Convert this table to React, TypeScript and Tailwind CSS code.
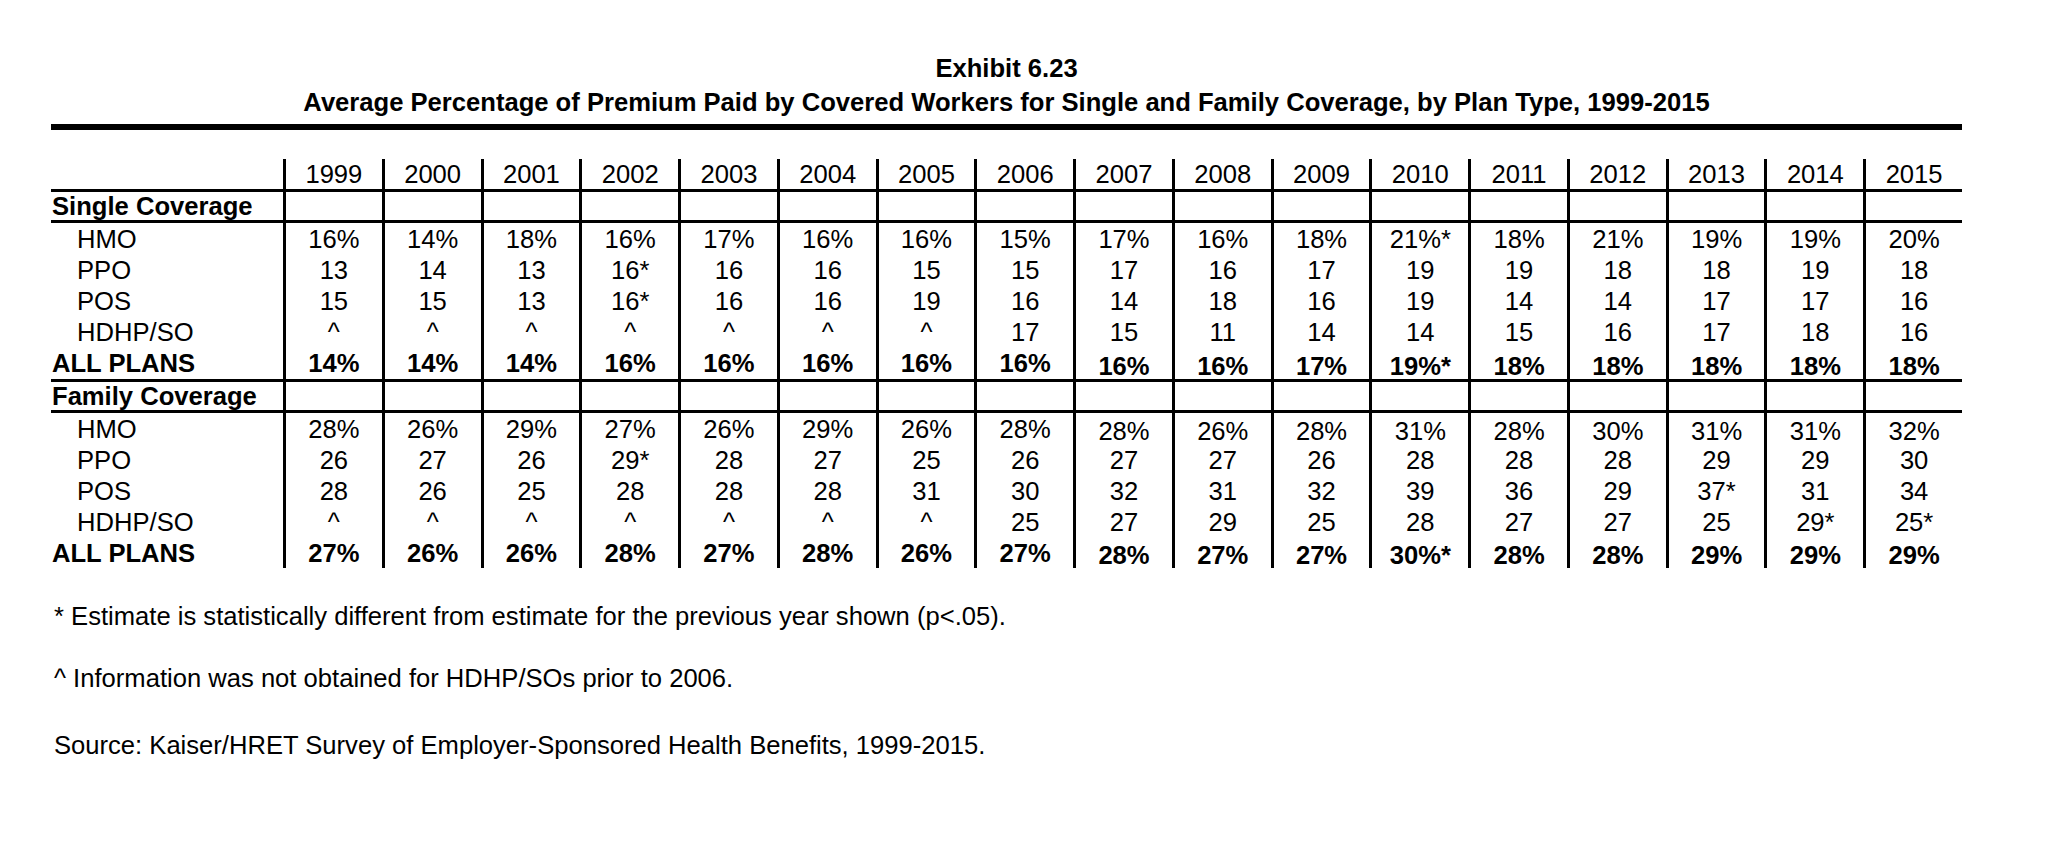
import React from "react";

const YEARS = [
  "1999", "2000", "2001", "2002", "2003", "2004", "2005", "2006", "2007",
  "2008", "2009", "2010", "2011", "2012", "2013", "2014", "2015",
];

// shift: values from 2007 on sit a little lower in the source exhibit
type Row = { label: string; values: string[]; total?: boolean; shift?: boolean };

const single: Row[] = [
  { label: "HMO", values: ["16%", "14%", "18%", "16%", "17%", "16%", "16%", "15%", "17%", "16%", "18%", "21%*", "18%", "21%", "19%", "19%", "20%"] },
  { label: "PPO", values: ["13", "14", "13", "16*", "16", "16", "15", "15", "17", "16", "17", "19", "19", "18", "18", "19", "18"] },
  { label: "POS", values: ["15", "15", "13", "16*", "16", "16", "19", "16", "14", "18", "16", "19", "14", "14", "17", "17", "16"] },
  { label: "HDHP/SO", values: ["^", "^", "^", "^", "^", "^", "^", "17", "15", "11", "14", "14", "15", "16", "17", "18", "16"] },
  { label: "ALL PLANS", total: true, shift: true, values: ["14%", "14%", "14%", "16%", "16%", "16%", "16%", "16%", "16%", "16%", "17%", "19%*", "18%", "18%", "18%", "18%", "18%"] },
];

const family: Row[] = [
  { label: "HMO", shift: true, values: ["28%", "26%", "29%", "27%", "26%", "29%", "26%", "28%", "28%", "26%", "28%", "31%", "28%", "30%", "31%", "31%", "32%"] },
  { label: "PPO", values: ["26", "27", "26", "29*", "28", "27", "25", "26", "27", "27", "26", "28", "28", "28", "29", "29", "30"] },
  { label: "POS", values: ["28", "26", "25", "28", "28", "28", "31", "30", "32", "31", "32", "39", "36", "29", "37*", "31", "34"] },
  { label: "HDHP/SO", values: ["^", "^", "^", "^", "^", "^", "^", "25", "27", "29", "25", "28", "27", "27", "25", "29*", "25*"] },
  { label: "ALL PLANS", total: true, shift: true, values: ["27%", "26%", "26%", "28%", "27%", "28%", "26%", "27%", "28%", "27%", "27%", "30%*", "28%", "28%", "29%", "29%", "29%"] },
];

const grid = "grid grid-cols-[232px_repeat(17,minmax(0,1fr))]";

function Cells({ values, bold, shift }: { values: string[]; bold?: boolean; shift?: boolean }) {
  return (
    <>
      {values.map((v, i) => (
        <div
          key={i}
          className={`border-l-[3px] border-black flex items-center justify-center ${
            shift && i >= 8 ? "pt-[5px]" : ""
          } ${bold ? "font-bold" : ""}`}
        >
          {v}
        </div>
      ))}
    </>
  );
}

function SectionHead({ title }: { title: string }) {
  return (
    <div className={`${grid} h-[31px] border-b-[3px] border-black`}>
      <div className="flex items-center pl-[1px] font-bold">{title}</div>
      <Cells values={YEARS.map(() => "")} />
    </div>
  );
}

function DataRows({ rows, last }: { rows: Row[]; last?: boolean }) {
  return (
    <>
      {rows.map((r) => (
        <div
          key={r.label}
          className={`${grid} ${r.total && !last ? "h-[35px] border-b-[3px] border-black" : "h-[31px]"}`}
        >
          <div className={`flex items-center ${r.total ? "pl-[1px] font-bold" : "pl-[26px]"}`}>{r.label}</div>
          <Cells values={r.values} bold={r.total} shift={r.shift} />
        </div>
      ))}
    </>
  );
}

export default function App() {
  return (
    <div className="w-[2050px] h-[850px] bg-white text-black font-['Liberation_Sans',Arial,sans-serif] text-[25.6px]">
      <div className="ml-[51px] w-[1911px] pt-[51px]">
        <div className="text-center font-bold leading-[34px]">Exhibit 6.23</div>
        <div className="text-center font-bold leading-[34px]">
          Average Percentage of Premium Paid by Covered Workers for Single and Family Coverage, by Plan Type, 1999-2015
        </div>
        <div className="mt-[5px] h-[6px] bg-black" />

        <div className="mt-[29px] leading-[20px]">
          <div className={`${grid} h-[33px] border-b-[3px] border-black`}>
            <div />
            <Cells values={YEARS} />
          </div>
          <SectionHead title="Single Coverage" />
          <DataRows rows={single} />
          <SectionHead title="Family Coverage" />
          <DataRows rows={family} last />
        </div>

        <div className="pl-[3px] leading-[34px]">
          <p className="mt-[31px]">* Estimate is statistically different from estimate for the previous year shown (p&lt;.05).</p>
          <p className="mt-[28px]">^ Information was not obtained for HDHP/SOs prior to 2006.</p>
          <p className="mt-[33px]">Source: Kaiser/HRET Survey of Employer-Sponsored Health Benefits, 1999-2015.</p>
        </div>
      </div>
    </div>
  );
}
